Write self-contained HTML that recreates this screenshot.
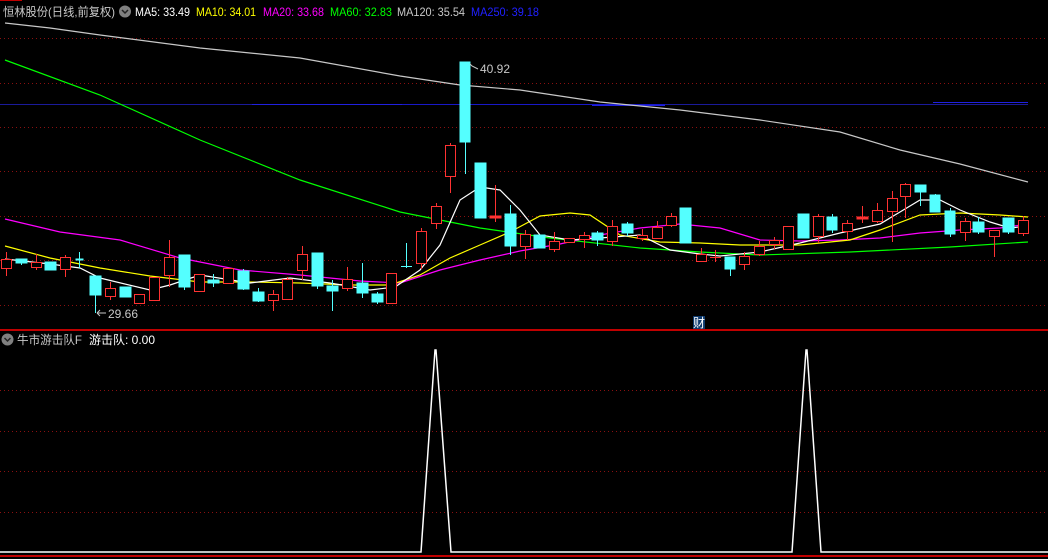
<!DOCTYPE html>
<html><head><meta charset="utf-8"><style>
html,body{margin:0;padding:0;background:#000;width:1048px;height:559px;overflow:hidden}
svg{display:block}
text{font-family:"Liberation Sans","Noto Sans CJK SC",sans-serif;font-size:12px}
</style></head><body>
<svg width="1048" height="559" viewBox="0 0 1048 559" xmlns="http://www.w3.org/2000/svg">
<rect width="1048" height="559" fill="#000"/>
<line x1="0" y1="0.5" x2="22" y2="0.5" stroke="#c00000"/>
<g stroke="#8a1010" stroke-dasharray="1 3">
<line x1="0" y1="38.5" x2="1048" y2="38.5"/><line x1="0" y1="83.5" x2="1048" y2="83.5"/>
<line x1="0" y1="127.5" x2="1048" y2="127.5"/><line x1="0" y1="171.5" x2="1048" y2="171.5"/>
<line x1="0" y1="216.5" x2="1048" y2="216.5"/><line x1="0" y1="260.5" x2="1048" y2="260.5"/>
<line x1="0" y1="305.5" x2="1048" y2="305.5"/>
<line x1="0" y1="390.5" x2="1048" y2="390.5"/><line x1="0" y1="431.5" x2="1048" y2="431.5"/>
<line x1="0" y1="471.5" x2="1048" y2="471.5"/><line x1="0" y1="512.5" x2="1048" y2="512.5"/>
</g>
<line x1="0" y1="104.5" x2="1028" y2="104.5" stroke="#1a1a9a"/>
<line x1="252" y1="104.5" x2="402" y2="104.5" stroke="#2020e0"/>
<line x1="402" y1="104.5" x2="665" y2="104.5" stroke="#1818c8"/>
<line x1="592" y1="105.5" x2="665" y2="105.5" stroke="#2020e0"/>
<line x1="933" y1="102.5" x2="1028" y2="102.5" stroke="#2020e0"/>
<line x1="0" y1="330" x2="1048" y2="330" stroke="#c00000" stroke-width="2"/>
<line x1="0" y1="556" x2="1048" y2="556" stroke="#c00000" stroke-width="2"/>

<polyline fill="none" stroke="#c8c8c8" stroke-width="1.2" points="5,23 50,28 100,35 200,48 300,58 400,76 460,85 520,90 600,102 680,110 760,120 840,132 900,150 960,164 1028,182"/>
<polyline fill="none" stroke="#00ff00" stroke-width="1.2" points="5,60 100,95 200,140 300,180 400,212 480,228 550,238 640,248 700,252 760,255 850,252 950,247 1028,242"/>
<polyline fill="none" stroke="#ff00ff" stroke-width="1.2" points="5,219 60,232 120,240 180,258 240,270 300,275 360,281 400,283 440,270 480,260 520,251 560,244 600,235 640,228 680,224 720,228 760,240 800,241 840,240 880,238 920,233 960,230 1000,228 1028,224"/>
<polyline fill="none" stroke="#ffff00" stroke-width="1.2" points="5,246 50,258 100,268 150,276 200,282 250,282 300,283 350,285 390,285 420,275 450,258 480,245 510,232 540,216 570,213 590,215 620,235 660,242 700,243 740,245 800,245 850,240 880,230 920,215 960,213 1000,215 1028,217"/>
<polyline fill="none" stroke="#ffffff" stroke-width="1.2" points="5,259 50,264 80,268 100,278 150,290 170,285 200,275 250,283 290,278 330,283 370,290 395,287 420,270 440,245 460,200 480,187 500,190 520,210 540,235 570,240 600,238 640,235 670,250 700,254 720,256 760,252 800,243 840,233 880,224 900,212 920,200 940,200 960,210 990,222 1010,228 1028,226"/>

<g fill="#54ffff" stroke="#54ffff" stroke-width="1">
<line x1="21.5" y1="259" x2="21.5" y2="265"/><rect x="16" y="259" width="11" height="4"/>
<rect x="45" y="262" width="11" height="8"/>
<line x1="79.5" y1="252" x2="79.5" y2="268"/><rect x="76" y="259" width="7" height="1"/>
<line x1="95.5" y1="276" x2="95.5" y2="313"/><rect x="90" y="276" width="11" height="19"/>
<rect x="120" y="287" width="11" height="10"/>
<line x1="184.5" y1="255" x2="184.5" y2="290"/><rect x="179" y="255" width="11" height="32"/>
<line x1="213.5" y1="274" x2="213.5" y2="287"/><rect x="208" y="280" width="11" height="3"/>
<line x1="243.5" y1="269" x2="243.5" y2="290"/><rect x="238" y="271" width="11" height="18"/>
<line x1="258.5" y1="288" x2="258.5" y2="302"/><rect x="253" y="292" width="11" height="9"/>
<line x1="317.5" y1="253" x2="317.5" y2="289"/><rect x="312" y="253" width="11" height="33"/>
<line x1="332.5" y1="280" x2="332.5" y2="311"/><rect x="327" y="286" width="11" height="5"/>
<line x1="362.5" y1="263" x2="362.5" y2="298"/><rect x="357" y="283" width="11" height="10"/>
<line x1="377.5" y1="292" x2="377.5" y2="304"/><rect x="372" y="294" width="11" height="8"/>
<line x1="406.5" y1="243" x2="406.5" y2="268"/><line x1="401" y1="266.5" x2="412" y2="266.5"/>
<line x1="465.5" y1="62" x2="465.5" y2="174"/><rect x="460" y="62" width="10" height="80"/>
<rect x="475" y="163" width="11" height="55"/>
<line x1="510.5" y1="205" x2="510.5" y2="255"/><rect x="505" y="214" width="11" height="32"/>
<rect x="534" y="235" width="11" height="13"/>
<line x1="597.5" y1="231" x2="597.5" y2="246"/><rect x="592" y="233" width="11" height="7"/>
<line x1="627.5" y1="222" x2="627.5" y2="236"/><rect x="622" y="224" width="11" height="9"/>
<rect x="680" y="208" width="11" height="35"/>
<line x1="730.5" y1="257" x2="730.5" y2="276"/><rect x="725" y="257" width="10" height="12"/>
<rect x="798" y="214" width="11" height="24"/>
<line x1="832.5" y1="214" x2="832.5" y2="233"/><rect x="827" y="217" width="10" height="13"/>
<line x1="920.5" y1="185" x2="920.5" y2="206"/><rect x="915" y="185" width="11" height="7"/>
<line x1="935.5" y1="194" x2="935.5" y2="212"/><rect x="930" y="195" width="10" height="17"/>
<line x1="950.5" y1="208" x2="950.5" y2="237"/><rect x="945" y="211" width="10" height="23"/>
<line x1="978.5" y1="217" x2="978.5" y2="234"/><rect x="973" y="222" width="11" height="10"/>
<line x1="1008.5" y1="218" x2="1008.5" y2="234"/><rect x="1003" y="218" width="11" height="14"/>
</g>

<g fill="none" stroke="#ff3232" stroke-width="1">
<line x1="6.5" y1="252" x2="6.5" y2="276"/><rect x="1.5" y="259.5" width="10" height="9" fill="#000"/>
<line x1="36.5" y1="254" x2="36.5" y2="270"/><rect x="31.5" y="262.5" width="10" height="5" fill="#000"/>
<line x1="65.5" y1="255" x2="65.5" y2="277"/><rect x="60.5" y="257.5" width="10" height="12" fill="#000"/>
<line x1="110.5" y1="282" x2="110.5" y2="300"/><rect x="105.5" y="288.5" width="10" height="8" fill="#000"/>
<rect x="134.5" y="294.5" width="10" height="9" fill="#000"/>
<rect x="149.5" y="277.5" width="10" height="23" fill="#000"/>
<line x1="169.5" y1="240" x2="169.5" y2="287"/><rect x="164.5" y="257.5" width="10" height="18" fill="#000"/>
<rect x="194.5" y="274.5" width="10" height="17" fill="#000"/>
<rect x="223.5" y="268.5" width="10" height="15" fill="#000"/>
<line x1="273.5" y1="290" x2="273.5" y2="311"/><rect x="268.5" y="294.5" width="10" height="6" fill="#000"/>
<line x1="287.5" y1="277" x2="287.5" y2="300"/><rect x="282.5" y="279.5" width="10" height="20" fill="#000"/>
<line x1="302.5" y1="246" x2="302.5" y2="280"/><rect x="297.5" y="254.5" width="10" height="16" fill="#000"/>
<line x1="347.5" y1="267" x2="347.5" y2="291"/><rect x="342.5" y="279.5" width="10" height="9" fill="#000"/>
<rect x="386.5" y="273.5" width="10" height="30" fill="#000"/>
<line x1="421.5" y1="228" x2="421.5" y2="269"/><rect x="416.5" y="231.5" width="10" height="32" fill="#000"/>
<line x1="436.5" y1="203" x2="436.5" y2="229"/><rect x="431.5" y="206.5" width="10" height="17" fill="#000"/>
<line x1="450.5" y1="143" x2="450.5" y2="193"/><rect x="445.5" y="145.5" width="10" height="31" fill="#000"/>
<line x1="495.5" y1="185" x2="495.5" y2="222"/><rect x="490" y="216" width="11" height="2" fill="#ff3232"/>
<line x1="525.5" y1="230" x2="525.5" y2="259"/><rect x="520.5" y="234.5" width="10" height="12" fill="#000"/>
<line x1="554.5" y1="232" x2="554.5" y2="252"/><rect x="549.5" y="241.5" width="10" height="8" fill="#000"/>
<rect x="564.5" y="238.5" width="10" height="4" fill="#000"/>
<line x1="584.5" y1="232" x2="584.5" y2="248"/><rect x="579.5" y="235.5" width="10" height="4" fill="#000"/>
<line x1="612.5" y1="220" x2="612.5" y2="246"/><rect x="607.5" y="226.5" width="10" height="15" fill="#000"/>
<line x1="642.5" y1="229" x2="642.5" y2="241"/><rect x="637.5" y="235.5" width="10" height="3" fill="#000"/>
<line x1="657.5" y1="221" x2="657.5" y2="239"/><rect x="652.5" y="227.5" width="10" height="11" fill="#000"/>
<line x1="671.5" y1="213" x2="671.5" y2="227"/><rect x="666.5" y="216.5" width="10" height="9" fill="#000"/>
<line x1="701.5" y1="248" x2="701.5" y2="262"/><rect x="696.5" y="254.5" width="10" height="7" fill="#000"/>
<line x1="715.5" y1="250" x2="715.5" y2="262"/><line x1="710" y1="257.5" x2="721" y2="257.5"/>
<line x1="744.5" y1="252" x2="744.5" y2="270"/><rect x="739.5" y="256.5" width="10" height="8" fill="#000"/>
<line x1="759.5" y1="241" x2="759.5" y2="256"/><rect x="754.5" y="246.5" width="10" height="8" fill="#000"/>
<line x1="774.5" y1="237" x2="774.5" y2="249"/><rect x="769.5" y="240.5" width="10" height="4" fill="#000"/>
<rect x="783.5" y="226.5" width="10" height="23" fill="#000"/>
<line x1="818.5" y1="214" x2="818.5" y2="243"/><rect x="813.5" y="216.5" width="10" height="20" fill="#000"/>
<line x1="847.5" y1="220" x2="847.5" y2="240"/><rect x="842.5" y="223.5" width="10" height="8" fill="#000"/>
<line x1="862.5" y1="206" x2="862.5" y2="223"/><rect x="857" y="217" width="11" height="2" fill="#ff3232"/>
<line x1="877.5" y1="203" x2="877.5" y2="223"/><rect x="872.5" y="210.5" width="10" height="11" fill="#000"/>
<line x1="892.5" y1="191" x2="892.5" y2="242"/><rect x="887.5" y="198.5" width="10" height="13" fill="#000"/>
<line x1="905.5" y1="183" x2="905.5" y2="218"/><rect x="900.5" y="184.5" width="10" height="12" fill="#000"/>
<line x1="965.5" y1="218" x2="965.5" y2="241"/><rect x="960.5" y="221.5" width="10" height="11" fill="#000"/>
<line x1="994.5" y1="230" x2="994.5" y2="257"/><rect x="989.5" y="230.5" width="10" height="6" fill="#000"/>
<line x1="1023.5" y1="216" x2="1023.5" y2="236"/><rect x="1018.5" y="220.5" width="10" height="13" fill="#000"/>
</g>

<g fill="#c8c8c8">
<text x="480" y="73" textLength="30" lengthAdjust="spacingAndGlyphs">40.92</text>
<text x="108" y="318" textLength="30" lengthAdjust="spacingAndGlyphs">29.66</text>
</g>
<polyline fill="none" stroke="#c8c8c8" points="478,69 472,66 470,64"/>
<line x1="97" y1="313" x2="106" y2="313" stroke="#c8c8c8"/>
<line x1="97" y1="313" x2="100" y2="310" stroke="#c8c8c8"/>
<line x1="97" y1="313" x2="100" y2="316" stroke="#c8c8c8"/>
<rect x="693" y="316" width="12" height="13" fill="#0e3a6e"/>
<text x="693" y="327" fill="#fff" font-size="11">财</text>

<text x="3" y="16" fill="#c8c8c8" textLength="112" lengthAdjust="spacingAndGlyphs">恒林股份(日线,前复权)</text>
<circle cx="125" cy="11.5" r="6" fill="#808080"/>
<polyline points="122,10 125,13 128,10" fill="none" stroke="#222" stroke-width="1.5"/>
<text x="135" y="16" fill="#ffffff" textLength="55" lengthAdjust="spacingAndGlyphs">MA5: 33.49</text>
<text x="196" y="16" fill="#ffff00" textLength="60" lengthAdjust="spacingAndGlyphs">MA10: 34.01</text>
<text x="263" y="16" fill="#ff00ff" textLength="61" lengthAdjust="spacingAndGlyphs">MA20: 33.68</text>
<text x="330" y="16" fill="#00ff00" textLength="62" lengthAdjust="spacingAndGlyphs">MA60: 32.83</text>
<text x="397" y="16" fill="#c8c8c8" textLength="68" lengthAdjust="spacingAndGlyphs">MA120: 35.54</text>
<text x="471" y="16" fill="#2020ff" textLength="68" lengthAdjust="spacingAndGlyphs">MA250: 39.18</text>

<circle cx="7.5" cy="339.5" r="6" fill="#808080"/>
<polyline points="4.5,338 7.5,341 10.5,338" fill="none" stroke="#222" stroke-width="1.5"/>
<text x="17" y="344" fill="#c8c8c8" textLength="65" lengthAdjust="spacingAndGlyphs">牛市游击队F</text>
<text x="89" y="344" fill="#ffffff" textLength="66" lengthAdjust="spacingAndGlyphs">游击队: 0.00</text>

<polyline fill="none" stroke="#ffffff" stroke-width="1.5" points="0,552 421,552 435,350 436,350 451,552 792,552 806,350 807,350 821,552 1048,552"/>
</svg>
</body></html>
